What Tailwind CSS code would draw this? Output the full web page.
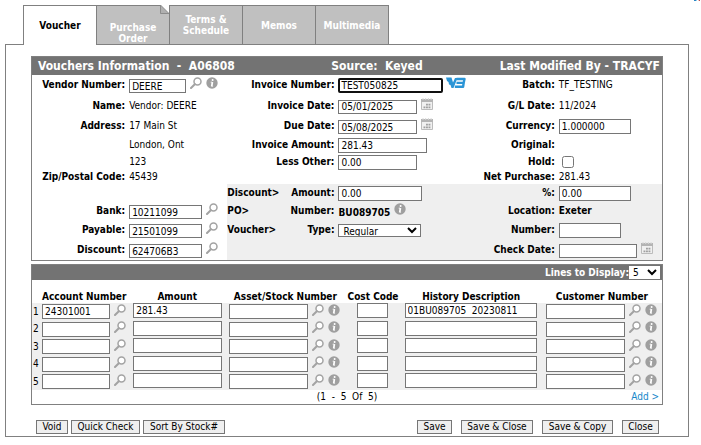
<!DOCTYPE html>
<html lang="en">
<head>
  <meta charset="UTF-8" />
  <meta name="viewport" content="width=device-width, initial-scale=1.0"/>
  <title>Voucher A06808</title>
  <script src="https://cdn.jsdelivr.net/npm/@tailwindcss/browser@4"></script>
  <style>
    body {
      font-family: 'DejaVu Sans Condensed', 'DejaVu Sans', sans-serif;
    }
  </style>
</head>
<body class="relative bg-white text-black text-[10px] leading-3 pt-[5px] pl-[5px] pr-3">

  <!-- Icons shared by the fields -->
  <svg class="hidden">
    <symbol id="search" viewBox="0 0 12 12">
      <circle cx="7.500" cy="4.500" r="3.500" fill="#fff" stroke="#a3a3a3" stroke-width="1.500"/>
      <path d="M4.800 7.200L1 11" stroke="#a3a3a3" stroke-width="2" stroke-linecap="round"/>
    </symbol>
    <symbol id="info" viewBox="0 0 12 12">
      <circle cx="6" cy="6" r="5.700" fill="#9f9f9f"/>
      <circle cx="6.600" cy="3" r="1" fill="#fff"/>
      <path d="M6.400 5L5.700 9.300" stroke="#fff" stroke-width="1.700"/>
      <path d="M4.600 5.200H6M5.500 9.200h1.600" stroke="#fff" stroke-width=".7"/>
    </symbol>
    <symbol id="calendar" viewBox="0 0 12 12">
      <path d="M.5 1.500h11v10H.5z" fill="#f0f0f0" stroke="#bcbcbc"/>
      <path d="M0 1h12v3H0z" fill="#b4b4b4"/>
      <path d="M2 0v2M4.700 0v2M7.400 0v2M10.100 0v2" stroke="#d8d8d8"/>
      <path d="M5 6.700h5M2.500 9.300h7.500" stroke="#a0a0a0" stroke-width="1.800" stroke-dasharray="1.900 .6"/>
    </symbol>
  </svg>

  <svg class="absolute top-0 right-0 w-[7px] h-px" viewBox="0 0 7 1"><path d="M0 0h2v1H0z" fill="#2a86c4"/><path d="M2 0h1v1H2z" fill="#8fd0f0"/><path d="M4 0h1v1H4z" fill="#f3c9c0"/><path d="M5 0h1v1H5z" fill="#c0504d"/></svg>

  <!-- Tabs -->
  <nav class="flex relative z-10 -mb-px pl-[18px] font-bold text-center text-[10px] leading-[11px] text-white">
    <a href="#" class="w-[74px] h-10 flex items-center justify-center bg-white text-black border border-b-0 border-[#808080]">Voucher</a>
    <a href="#" class="relative w-[74px] h-10 -ml-px flex items-end justify-center bg-[#c0c0c0] border border-[#808080]">Purchase<br>Order
      <svg class="absolute -top-px right-0 size-[9px]" viewBox="0 0 9 9"><path d="M0 0h9v9z" fill="#fff"/><path d="M.5 0v8.500H9z" fill="#b0b0b0" stroke="#808080" stroke-width=".8"/></svg>
    </a>
    <a href="#" class="w-[74px] h-10 -ml-px flex items-center justify-center bg-[#c0c0c0] border border-[#808080]">Terms &amp;<br>Schedule</a>
    <a href="#" class="w-[74px] h-10 -ml-px flex items-center justify-center bg-[#c0c0c0] border border-[#808080]">Memos</a>
    <a href="#" class="w-[74px] h-10 -ml-px flex items-center justify-center bg-[#c0c0c0] border border-[#808080]">Multimedia</a>
  </nav>

  <main class="border border-[#808080] pt-[11px] pl-[25px] pr-[25px] pb-[2px]">

    <!-- Voucher details -->
    <section class="border border-[#808080]">
      <h1 class="h-[18px] grid grid-cols-[291fr_163fr_163fr] items-center pl-[6px] pr-[2px] bg-[#737373] text-white text-xs font-bold whitespace-pre"><span>Vouchers Information  -  A06808</span><span>Source:  Keyed</span><span class="text-right">Last Modified By - TRACYF</span></h1>
      <div id="details"></div>
    </section>

    <!-- Distribution lines -->
    <section class="mt-[3px] border border-[#808080]">
      <div class="h-[15px] flex items-center justify-end pr-[2px] bg-[#737373] text-white font-bold">
        <label for="lines">Lines to Display:</label>
        <select id="lines" class="w-[31px] h-[13px] bg-white text-black font-normal"><option>5</option><option>10</option></select>
      </div>
      <table class="w-full table-fixed mt-[11px]">
        <colgroup>
          <col class="w-[10px]"><col class="w-[91px]"><col class="w-[96px]"><col class="w-[116px]"><col class="w-[59px]"><col class="w-[141px]"><col class="w-[116px]">
        </colgroup>
        <thead>
          <tr class="whitespace-nowrap">
            <th></th>
            <th class="text-left">Account Number</th>
            <th class="pr-2">Amount</th>
            <th class="pr-1">Asset/Stock Number</th>
            <th class="pr-1">Cost Code</th>
            <th class="pr-2">History Description</th>
            <th class="pr-1">Customer Number</th>
          </tr>
        </thead>
        <tbody id="rows"></tbody>
      </table>
      <div class="grid grid-cols-3 h-[14px] items-center">
        <span class="col-start-2 text-center whitespace-pre">(1  -  5  Of  5)</span>
        <a href="#" class="text-right pr-[3px] text-[#1787c9]">Add &gt;</a>
      </div>
    </section>

    <!-- Actions -->
    <div class="flex mt-[15px] pl-[5px] pr-[4px]">
      <button class="h-[14px] w-8 border border-[#767676] bg-[#efefef]">Void</button>
      <button class="h-[14px] w-[69px] ml-[3px] border border-[#767676] bg-[#efefef]">Quick Check</button>
      <button class="h-[14px] w-[82px] ml-[3px] border border-[#767676] bg-[#efefef]">Sort By Stock#</button>
      <button class="h-[14px] w-[35px] ml-auto border border-[#767676] bg-[#efefef]">Save</button>
      <button class="h-[14px] w-[72px] ml-[9px] border border-[#767676] bg-[#efefef]">Save &amp; Close</button>
      <button class="h-[14px] w-[71px] ml-[9px] border border-[#767676] bg-[#efefef]">Save &amp; Copy</button>
      <button class="h-[14px] w-[37px] ml-[9px] border border-[#767676] bg-[#efefef]">Close</button>
    </div>
  </main>

  <script>
    const icon = {
      search: '<svg class="size-3 mb-1 shrink-0"><use href="#search"/></svg>',
      info: '<svg class="size-3 mb-1 shrink-0"><use href="#info"/></svg>',
      calendar: '<svg class="size-3 mb-1 shrink-0"><use href="#calendar"/></svg>'
    };
    const box = (id, width, value) =>
      `<input id="${id}" value="${value}" class="${width} h-[15px] shrink-0 border border-[#767676] bg-white px-[2px]"/>`;
    const iconBox = (id, width, value) =>
      `<input id="${id}" value="${value}" class="${width} h-[14px] mt-[2px] shrink-0 border border-[#767676] bg-white px-[2px]"/>`;
    const logo = `<svg class="w-5 h-3 mb-1 -ml-px shrink-0" viewBox="0 0 20 12">
      <path d="M0 .5h5.500L7 5.500 9 1h2.500L7.500 11H5.500L4.500 8 3 7.500 2.500 5 1 4z" fill="#2b95d6"/>
      <path d="M10.500 2h8l-.8 3.800-.6 4H8.800M10.500 5.900h7" stroke="#2b95d6" stroke-width="2.400" stroke-linejoin="round" fill="none"/>
    </svg>`;

    // row height, then label / id / value for each of the three columns
    const details = [
      ['h-5', ['Vendor Number:', 'vendor', iconBox('vendor', 'w-[57px]', 'DEERE') + icon.search + icon.info],
        ['Invoice Number:', 'invoice', '<input id="invoice" value="TEST050825" class="w-[105px] h-[15px] shrink-0 border-2 border-[#101010] rounded-xs px-px"/>' + logo],
        ['Batch:', '', 'TF_TESTING']],
      ['h-[21px]', ['Name:', '', 'Vendor: DEERE'],
        ['Invoice Date:', 'invdate', iconBox('invdate', 'w-[79px]', '05/01/2025') + icon.calendar], ['G/L Date:', '', '11/2024']],
      ['h-5', ['Address:', '', '17 Main St'],
        ['Due Date:', 'duedate', iconBox('duedate', 'w-[79px]', '05/08/2025') + icon.calendar], ['Currency:', 'currency', box('currency', 'w-[72px]', '1.000000')]],
      ['h-[18px]', ['', '', 'London, Ont'],
        ['Invoice Amount:', 'invamount', box('invamount', 'w-[89px]', '281.43')], ['Original:', '', '']],
      ['h-4', ['', '', '123'],
        ['Less Other:', 'less', box('less', 'w-[79px]', '0.00')],
        ['Hold:', 'hold', '<input id="hold" type="checkbox" class="size-3 ml-[3px]"/>']],
      ['h-[14px]', ['Zip/Postal Code:', '', '45439'], ['', '', ''], ['Net Purchase:', '', '281.43']],
      ['h-[18px]', ['', '', ''], ['Amount:', 'disc', box('disc', 'w-[84px]', '0.00'), 'Discount&gt;'], ['%:', 'pct', box('pct', 'w-[72px]', '0.00')]],
      ['h-[18px]', ['Bank:', 'bank', iconBox('bank', 'w-[73px]', '10211099') + icon.search],
        ['Number:', '', '<b class="pt-1">BU089705</b>' + icon.info, 'PO&gt;'], ['Location:', '', '<b>Exeter</b>']],
      ['h-5', ['Payable:', 'payable', iconBox('payable', 'w-[73px]', '21501099') + icon.search],
        ['Type:', 'type', '<select id="type" class="w-[83px] h-[13px] border border-[#767676] bg-white"><option>Regular</option></select>', 'Voucher&gt;'], ['Number:', 'chknum', box('chknum', 'w-[62px]', '')]],
      ['h-5', ['Discount:', 'discount', iconBox('discount', 'w-[73px]', '624706B3') + icon.search], ['', '', ''],
        ['Check Date:', 'chkdate', iconBox('chkdate', 'w-[78px]', '') + icon.calendar]]
    ];
    const cell = ([label, id, value, group], shade) => `
      <div class="flex items-center justify-between pr-1 font-bold whitespace-nowrap ${shade}">
        <span>${group || ''}</span>${id ? `<label for="${id}">${label}</label>` : `<span>${label}</span>`}
      </div>
      <div class="flex items-center gap-1 min-w-0 whitespace-nowrap ${shade}">${value}</div>`;
    document.getElementById('details').innerHTML = details.map(([height, left, middle, right], i) => {
      const shade = i > 5 ? 'bg-[#efefef]' : '';
      return `<div class="grid grid-cols-[minmax(0,97fr)_minmax(0,98fr)_minmax(0,111fr)_minmax(0,112fr)_minmax(0,108fr)_minmax(0,103fr)] ${height}">${cell(left, '') + cell(middle, shade) + cell(right, shade)}</div>`;
    }).join('');

    const lines = [['24301001', '281.43', '01BU089705  20230811'], ['', '', ''], ['', '', ''], ['', '', ''], ['', '', '']];
    const field = (label, width, value) =>
      `<input aria-label="${label}" value="${value}" class="${width} h-[15px] shrink-0 border border-[#767676] bg-white px-[2px]"/>`;
    document.getElementById('rows').innerHTML = lines.map(([account, amount, history], i) => `
      <tr class="bg-[#efefef] odd:h-[17px] even:h-[18px]">
        <td class="p-0 pl-px">${i + 1}</td>
        <td class="p-0"><div class="flex items-center gap-1">${field('Account', 'w-[68px]', account)}${icon.search}</div></td>
        <td class="p-0"><div class="flex pb-[2px]">${field('Amount', 'w-[89px]', amount)}</div></td>
        <td class="p-0"><div class="flex items-center gap-1">${field('Asset', 'w-[79px]', '')}${icon.search}${icon.info}</div></td>
        <td class="p-0 pl-3"><div class="flex pb-[2px]">${field('Cost code', 'w-[31px]', '')}</div></td>
        <td class="p-0"><div class="flex pb-[2px]">${field('History', 'w-[132px]', history)}</div></td>
        <td class="p-0"><div class="flex items-center gap-1">${field('Customer', 'w-[79px]', '')}${icon.search}${icon.info}</div></td>
      </tr>`).join('');
  </script>
</body>
</html>
